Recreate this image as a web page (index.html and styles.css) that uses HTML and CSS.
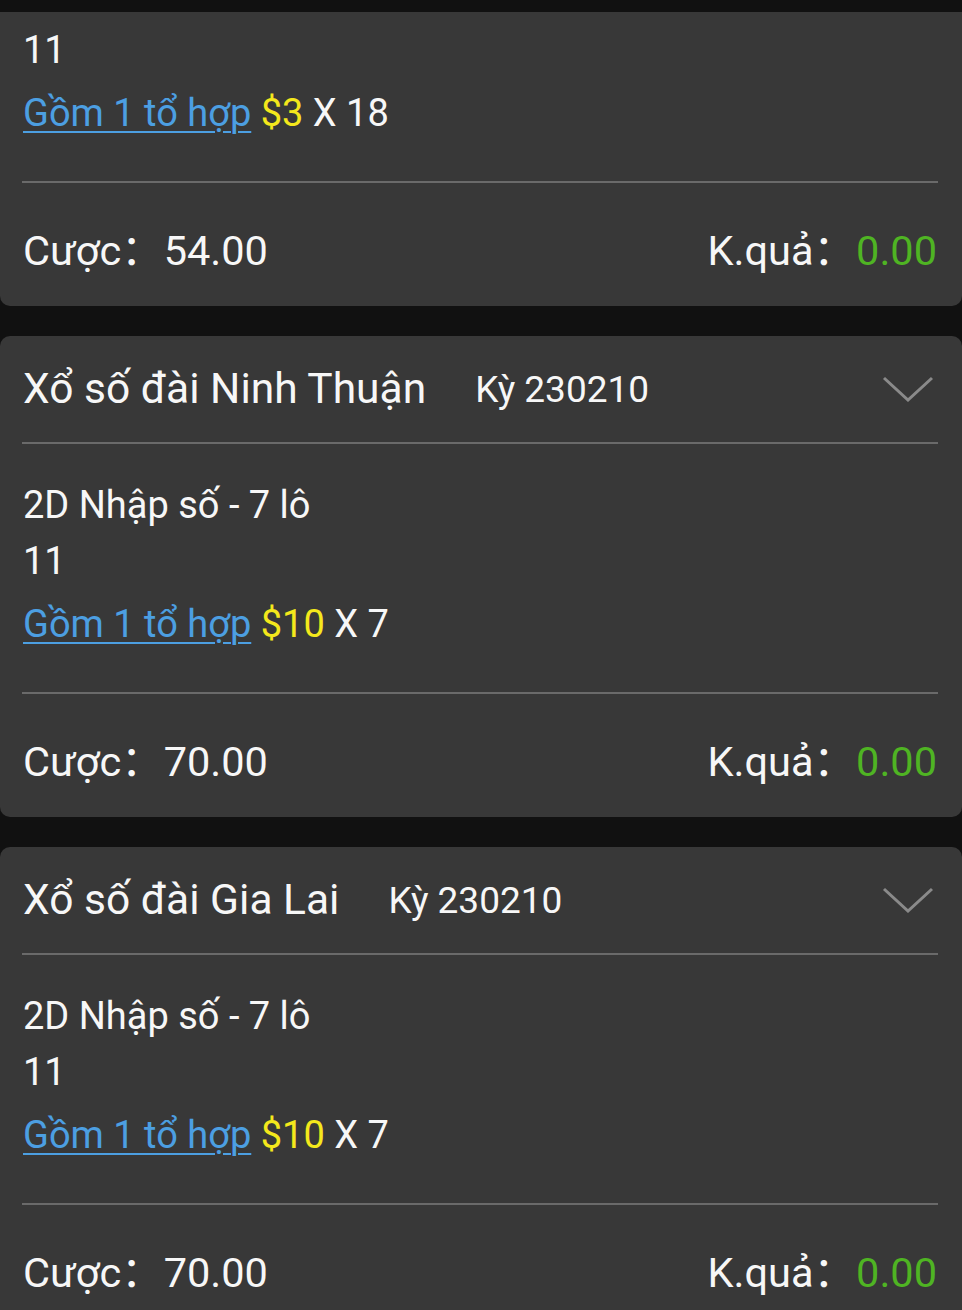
FILE: index.html
```html
<!DOCTYPE html>
<html lang="vi">
<head>
    <meta charset="UTF-8">
    <meta name="viewport" content="width=device-width, initial-scale=1.0">
    <title>Lịch sử cược</title>
    <link rel="stylesheet" href="styles.css">
</head>
<body>

    <div class="list">
        <!-- first card is scrolled, only its lower part is in view -->
        <div class="card first">
            <div class="card-body">
                <div class="row">11</div>
                <div class="row combo"><a href="#">Gồm 1 tổ hợp</a> <span class="money">$3</span> X 18</div>
            </div>
            <div class="line"></div>
            <div class="card-foot">
                <span>Cược<span class="colon">：</span>54.00</span>
                <span>K.quả<span class="colon">：</span><span class="win">0.00</span></span>
            </div>
        </div>

        <div class="card">
            <div class="card-head">
                <span class="title">Xổ số đài Ninh Thuận</span>
                <span class="period">Kỳ 230210</span>
                <svg class="chevron" viewBox="0 0 52 26"><polyline points="2,2 26,24 50,2"/></svg>
            </div>
            <div class="line"></div>
            <div class="card-body">
                <div class="row">2D Nhập số - 7 lô</div>
                <div class="row">11</div>
                <div class="row combo"><a href="#">Gồm 1 tổ hợp</a> <span class="money">$10</span> X 7</div>
            </div>
            <div class="line"></div>
            <div class="card-foot">
                <span>Cược<span class="colon">：</span>70.00</span>
                <span>K.quả<span class="colon">：</span><span class="win">0.00</span></span>
            </div>
        </div>

        <div class="card">
            <div class="card-head">
                <span class="title">Xổ số đài Gia Lai</span>
                <span class="period">Kỳ 230210</span>
                <svg class="chevron" viewBox="0 0 52 26"><polyline points="2,2 26,24 50,2"/></svg>
            </div>
            <div class="line"></div>
            <div class="card-body">
                <div class="row">2D Nhập số - 7 lô</div>
                <div class="row">11</div>
                <div class="row combo"><a href="#">Gồm 1 tổ hợp</a> <span class="money">$10</span> X 7</div>
            </div>
            <div class="line"></div>
            <div class="card-foot">
                <span>Cược<span class="colon">：</span>70.00</span>
                <span>K.quả<span class="colon">：</span><span class="win">0.00</span></span>
            </div>
        </div>
    </div>

</body>
</html>
```

FILE: styles.css
```css
body {
    margin: 0;
    background: #111111;
    color: #f7f7f7;
    font-family: 'Roboto', 'Noto Sans CJK SC', sans-serif;
    font-size: 40px;
    overflow: hidden;
}
.list {
    display: flex;
    flex-direction: column;
    gap: 30px;
    padding-top: 12px;
}
.card {
    background: #383838;
    border-radius: 10px;
}
.card.first {
    border-radius: 0 0 10px 10px;
}
.card.first .card-body {
    padding-top: 10px;
}
.card-head {
    height: 106px;
    display: flex;
    align-items: center;
    padding: 0 28px 0 23px;
}
.title {
    font-size: 42.5px;
    line-height: 56px;
}
.period {
    font-size: 37px;
    margin-left: 49px;
}
.chevron {
    width: 52px;
    height: 26px;
    margin-left: auto;
    fill: none;
    stroke: #8a8a8a;
    stroke-width: 3;
}
.line {
    height: 2px;
    margin: 0 24px 0 22px;
    background: #6a6a6a;
}
.card-body {
    padding: 33px 23px 40px;
    font-size: 38px;
}
.row {
    line-height: 56px;
}
.combo {
    margin-top: 7px;
}
.combo a {
    color: #4c9fe2;
    text-decoration-thickness: 2px;
    text-underline-offset: 5px;
}
.money {
    color: #f4e81c;
}
.card-foot {
    display: flex;
    justify-content: space-between;
    font-size: 41.5px;
    line-height: 56px;
    padding: 40px 25px 27px 23px;
}
.colon {
    margin-right: 1px;
}
.win {
    color: #4fb423;
}
```
